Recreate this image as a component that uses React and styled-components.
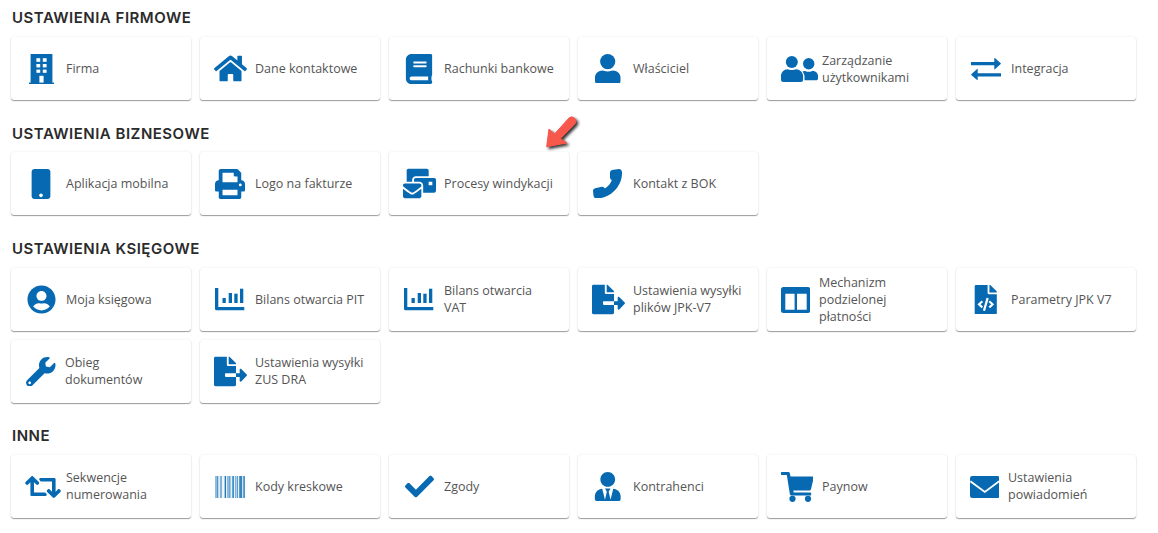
import React from "react";
import styled, { createGlobalStyle } from "styled-components";
import {
  FaHome, FaBook, FaMobile, FaPrint, FaMailBulk, FaUserCircle, FaFileExport,
  FaFileCode, FaWrench, FaRetweet, FaCheck, FaUserTie,
} from "react-icons/fa";

const Global = createGlobalStyle`
  html, body { margin: 0; padding: 0; background: #fff; }
  body { font-family: "Open Sans", "Liberation Sans", sans-serif; }
`;

const Page = styled.main`
  position: relative;
  width: 1158px;
  height: 533px;
  overflow: hidden;
  box-sizing: border-box;
  padding: 8px 0 0 11px;
`;
const Section = styled.section`
  margin-bottom: ${(p) => p.$after}px;
`;
const Heading = styled.h2`
  margin: 0 0 ${(p) => 9 - (p.$drop ?? 0)}px 1px;
  padding-top: ${(p) => p.$drop ?? 0}px;
  height: 20px;
  font: 600 15px/20px Inter, "Liberation Sans", sans-serif;
  letter-spacing: 0.5px;
  color: #2b2b2b;
`;
const CardGrid = styled.div`
  display: grid;
  grid-template-columns: repeat(6, 180px);
  grid-auto-rows: 63px;
  gap: 9px;
`;
const Card = styled.a`
  display: flex;
  align-items: center;
  background: #fff;
  border-radius: 3px;
  box-shadow: 0 1px 1px rgba(0, 0, 0, 0.38), 0 0 3px rgba(0, 0, 0, 0.07);
`;
const IconCell = styled.span`
  flex: none;
  box-sizing: border-box;
  width: 55px;
  padding-left: ${(p) => p.$pad ?? 5}px;
  display: flex;
  justify-content: center;
  color: #0669b2;
`;
const Label = styled.span`
  margin-left: ${(p) => p.$shift ?? 0}px;
  margin-bottom: ${(p) => p.$tail ?? 1}px;
  font-size: 12.5px;
  line-height: 17px;
  color: #555;
  white-space: pre-line;
`;
const Pointer = styled.svg`
  position: absolute;
  left: 543px;
  top: 113px;
  filter: drop-shadow(2px 2px 1.5px rgba(0, 0, 0, 0.8));
`;

const Svg = ({ w, h, children }) => (
  <svg width={w} height={h} viewBox={`0 0 ${w} ${h}`} fill="currentColor">{children}</svg>
);

const Building = () => (
  <Svg w={25} h={30}>
    <rect x="0" y="28.6" width="25" height="1.4" />
    <rect x="1.6" y="0" width="21.8" height="29" />
    <g fill="#fff">
      <rect x="7.4" y="4.2" width="3.8" height="3.6" /><rect x="13.8" y="4.2" width="3.8" height="3.6" />
      <rect x="7.4" y="10" width="3.8" height="3.4" /><rect x="13.8" y="10" width="3.8" height="3.4" />
      <rect x="7.4" y="15.6" width="3.8" height="3.2" /><rect x="13.8" y="15.6" width="3.8" height="3.2" />
      <rect x="10.4" y="21.8" width="4.2" height="6.8" />
    </g>
  </Svg>
);
const Person = () => (
  <Svg w={25.5} h={29.5}>
    <circle cx="12.7" cy="7.6" r="7.6" />
    <path d="M2.5 29.5A2.5 2.5 0 0 1 0 27v-3.5c0-4 3.5-7 7.5-7 1.5 0 2.7 1 5.2 1s3.7-1 5.3-1c4 0 7.5 3 7.5 7V27a2.5 2.5 0 0 1-2.5 2.5z" />
  </Svg>
);
const People = () => (
  <Svg w={37} h={26}>
    <circle cx="10.8" cy="6" r="6" />
    <path d="M2.5 26A2.5 2.5 0 0 1 0 23.5v-3.2c0-4 3-7 6.5-7 1.200 0 2.300.8 4.300.8s3.100-.8 4.300-.8c3.500 0 7 3 7 7v3.200a2.500 2.500 0 0 1-2.500 2.500z" />
    <circle cx="27.700" cy="7.700" r="5.700" />
    <path d="M23.500 24.300v-3.600c0-1.900-.8-3.800-2-5.200.6-.3 1.300-.5 2-.5 1 0 2 .8 4.200.8s3-.8 4.200-.8c2.800 0 5.100 2.300 5.100 5.100v2.400c0 1-.8 1.800-1.800 1.800z" />
  </Svg>
);
const Exchange = () => (
  <Svg w={30} h={22}>
    <path d="M0 4.100h23.300V.3c0-.3.4-.5.6-.2l5.800 5.200c.3.200.3.600 0 .8l-5.800 5.200c-.2.300-.6.100-.6-.2V7.300H0z" />
    <path d="M30 15.300H6.700v-4.100c0-.3-.4-.5-.6-.2L.3 16.200c-.3.200-.3.600 0 .8l5.800 5c.2.300.6.100.6-.2v-3.300H30z" />
  </Svg>
);
const Phone = () => (
  <Svg w={29.400} h={29.600}>
    <path d="M19 1 26 0q2.500 0 3 3C29.500 16 19 28.500 4.500 29.500 1 29.700.8 27.500.5 26.500L0 22q0-2.200 2-2.700l7-1.500q1.800-.2 3 1.700c3-2 5.500-5 6.800-8.300Q17 10 17 8.500v-5Q17 1.500 19 1z" />
  </Svg>
);
const Bars = () => (
  <Svg w={29.300} h={22.300}>
    <path d="M0 0h3.300v19H29.300v3.300H1.500A1.500 1.500 0 0 1 0 20.800z" />
    <rect x="7.500" y="10" width="3.300" height="5" />
    <rect x="13.700" y="5" width="3.300" height="10" />
    <rect x="19.300" y="5.700" width="3.300" height="9.300" />
    <rect x="25" y=".7" width="3.300" height="14.300" />
  </Svg>
);
const Columns = () => (
  <Svg w={29.300} h={26}>
    <path fillRule="evenodd" d="M2.500 0h24.300a2.500 2.500 0 0 1 2.500 2.500v21a2.500 2.500 0 0 1-2.500 2.500H2.500A2.500 2.500 0 0 1 0 23.500v-21A2.500 2.500 0 0 1 2.500 0zM4.300 6.700v16h9.300v-16zM16 6.700v16h9.700v-16z" />
  </Svg>
);
const BARCODE = [.45,.45,.7,.25,.12,.5,.5,.08,.05,.35,.9,.1,.45,.45,.6,.35,.1,.6,.75,.1,.5,.3,.65,.1,.65,.8,.8,.2,.6,.7];
const Barcode = () => (
  <Svg w={30} h={22}>
    {BARCODE.map((o, i) => (
      <rect key={i} x={i} y="0" width="1" height="22" opacity={o} />
    ))}
  </Svg>
);
const Cart = () => (
  <Svg w={32.600} h={30}>
    <path d="M1 0h6.200c.9 0 1.500.5 1.700 1.400l.6 3H31.200c1 0 1.600.8 1.400 1.800l-2.700 11.300c-.2.700-.7 1.100-1.400 1.100H12.300l.4 2h16.300c.9 0 1.400.7 1.300 1.500l-.3 1.400H10.500c-.8 0-1.400-.5-1.600-1.300L5.800 3H1a1.500 1.500 0 0 1 0-3z" />
    <circle cx="11.500" cy="26.800" r="3.100" />
    <circle cx="27" cy="26.800" r="3.100" />
  </Svg>
);
const Envelope = () => (
  <Svg w={29.600} h={22}>
    <rect width="29.600" height="22" rx="2.200" />
    <path d="M.4 5.300 14.800 16 29.200 5.300" fill="none" stroke="#fff" strokeWidth="1.800" />
  </Svg>
);

const SECTIONS = [
  {
    title: "USTAWIENIA FIRMOWE", after: 23,
    items: [
      { text: "Firma", icon: <Building /> },
      { text: "Dane kontaktowe", icon: <FaHome size={33} /> },
      { text: "Rachunki bankowe", icon: <FaBook size={30} /> },
      { text: "Właściciel", icon: <Person /> },
      { text: "Zarządzanie\nużytkownikami", icon: <People />, pad: 9, tail: 0 },
      { text: "Integracja", icon: <Exchange /> },
    ],
  },
  {
    title: "USTAWIENIA BIZNESOWE", after: 24, drop: 1,
    items: [
      { text: "Aplikacja mobilna", icon: <FaMobile size={30} /> },
      { text: "Logo na fakturze", icon: <FaPrint size={30} /> },
      { text: "Procesy windykacji", icon: <FaMailBulk size={33} /> },
      { text: "Kontakt z BOK", icon: <Phone /> },
    ],
  },
  {
    title: "USTAWIENIA KSIĘGOWE", after: 23,
    items: [
      { text: "Moja księgowa", icon: <FaUserCircle size={29} /> },
      { text: "Bilans otwarcia PIT", icon: <Bars /> },
      { text: "Bilans otwarcia\nVAT", icon: <Bars /> },
      { text: "Ustawienia wysyłki\nplików JPK-V7", icon: <FaFileExport size={33} /> },
      { text: "Mechanizm\npodzielonej\npłatności", icon: <Columns />, pad: 2, shift: -3 },
      { text: "Parametry JPK V7", icon: <FaFileCode size={29.500} /> },
      { text: "Obieg\ndokumentów", icon: <FaWrench size={29.500} />, shift: -1 },
      { text: "Ustawienia wysyłki\nZUS DRA", icon: <FaFileExport size={33} /> },
    ],
  },
  {
    title: "INNE", after: 0,
    items: [
      { text: "Sekwencje\nnumerowania", icon: <FaRetweet size={36} />, pad: 9 },
      { text: "Kody kreskowe", icon: <Barcode /> },
      { text: "Zgody", icon: <FaCheck size={29} /> },
      { text: "Kontrahenci", icon: <FaUserTie size={29.500} /> },
      { text: "Paynow", icon: <Cart /> },
      { text: "Ustawienia\npowiadomień", icon: <Envelope />, pad: 2, shift: -3 },
    ],
  },
];

export default function App() {
  return (
    <Page>
      <Global />
      {SECTIONS.map((s) => (
        <Section key={s.title} $after={s.after}>
          <Heading $drop={s.drop}>{s.title}</Heading>
          <CardGrid>
            {s.items.map((it) => (
              <Card key={it.text}>
                <IconCell $pad={it.pad}>{it.icon}</IconCell>
                <Label $shift={it.shift} $tail={it.tail}>{it.text}</Label>
              </Card>
            ))}
          </CardGrid>
        </Section>
      ))}
      <Pointer width="36" height="40" viewBox="0 0 36 40">
        <path d="M3.700 33.700 6 16l5.500 5L26 5a4.200 4.200 0 0 1 6 5.800L17.500 25.500l6.200 4.500z" fill="#f8574b" stroke="#f8574b" strokeWidth="1" strokeLinejoin="round" />
      </Pointer>
    </Page>
  );
}
